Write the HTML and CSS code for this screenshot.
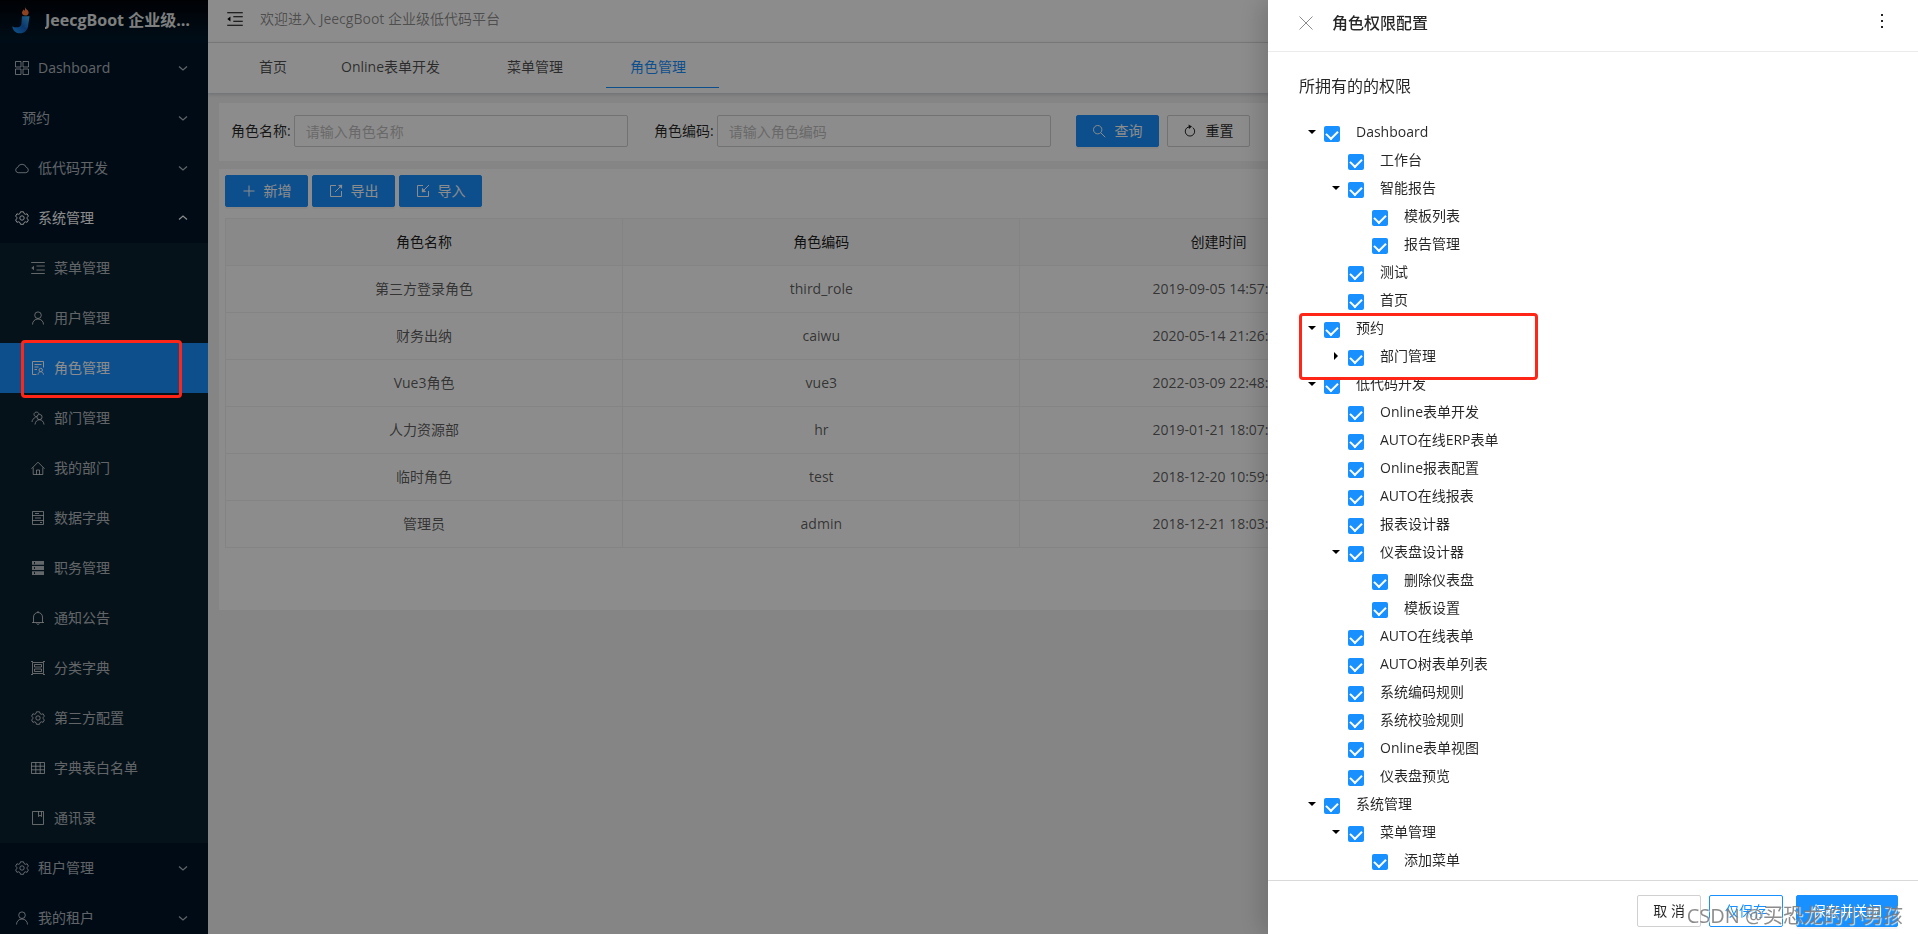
FILE: index.html
```html
<!DOCTYPE html>
<html lang="zh-CN">
<head>
<meta charset="utf-8">
<title>角色管理</title>
<link rel="stylesheet" href="styles.css">
</head>
<body>
<svg class="defs" aria-hidden="true">
  <defs>
    <linearGradient id="logo-blue" x1="0" y1="1" x2="1" y2="0"><stop offset="0" stop-color="#1aa0ff"/><stop offset=".5" stop-color="#1363c8"/><stop offset="1" stop-color="#3cb4f5"/></linearGradient>
  </defs>
  <symbol id="i-grid" viewBox="0 0 14 14"><path d="M.5.5h5.500v5.500h-5.500zM8 .5h5.500v5.500h-5.500zM.5 8h5.500v5.500h-5.500zM8 8h5.500v5.500h-5.500z"/></symbol>
  <symbol id="i-cloud" viewBox="0 0 14 14"><path d="M3.200 11.700a2.700 2.700 0 0 1-.5-5.300A4.500 4.500 0 0 1 11.300 6.400a2.700 2.700 0 0 1-.5 5.300z"/></symbol>
  <symbol id="i-gear" viewBox="0 0 14 14"><path d="M5.500.8h3l.5 1.700 1.300.8 1.800-.5 1.300 2.300-1.200 1.200v1.500l1.200 1.200-1.300 2.300-1.800-.5-1.300.8-.5 1.700h-3l-.5-1.700-1.300-.8-1.800.5L.6 9l1.200-1.200V6.300L.6 5.100l1.300-2.300 1.800.5 1.300-.8z"/><circle cx="7" cy="7" r="2.200"/></symbol>
  <symbol id="i-menu" viewBox="0 0 14 14"><path d="M.2 1.500h13.600M5.500 5h8.300M5.500 9h8.300M.2 12.500h13.600"/><path class="solid" d="M.3 7 3 4.800v4.400z"/></symbol>
  <symbol id="i-user" viewBox="0 0 14 14"><circle cx="7" cy="4.200" r="3.300"/><path d="M1.500 13.500c0-3 2.200-5.500 5.500-5.500s5.500 2.500 5.500 5.500"/></symbol>
  <symbol id="i-role" viewBox="0 0 14 14"><path d="M5.500 13.500h-4V.5h11v6M3.500 3.500h7M3.500 6h4M3.500 8.500h2.500"/><circle cx="9.700" cy="9" r="1.700"/><path d="M7 13.700c0-1.800 1.200-3 2.700-3s2.700 1.200 2.700 3"/></symbol>
  <symbol id="i-team" viewBox="0 0 14 14"><circle cx="8.500" cy="6" r="2.600"/><path d="M4 13.500C4.300 10.800 6 8.700 8.500 8.700s4.200 2.100 4.500 4.800M6 5.800C2.500 5.500 2 2 4.800 1.200 6.200.8 7.500 1.600 8 2.800M4.500 6.500C2.500 7 1.200 8.800 1 11"/></symbol>
  <symbol id="i-home" viewBox="0 0 14 14"><path d="M.5 7.700 7 1.200l6.500 6.500M2.200 6.500v7h9.600v-7M5.500 13.500V9h3v4.500"/></symbol>
  <symbol id="i-book" viewBox="0 0 14 14"><path d="M1.500.5h11v13h-11zM1.500 4.500h11M1.500 9.500h11M4 2.500h4M4 7h6M9 11.500h2"/></symbol>
  <symbol id="i-server" viewBox="0 0 14 14"><path class="solid" d="M1 0h12v3.800H1zM1 5.100h12v3.800H1zM1 10.200h12V14H1z"/><path class="cut" d="M3.500 1v1.800M3.500 6.100v1.800M3.500 11.200V13"/></symbol>
  <symbol id="i-bell" viewBox="0 0 14 14"><path d="M1 11.500h12M2.500 11.500V6a4.500 4.500 0 0 1 9 0v5.500M7 0v1.500M5.500 12.500Q7 14.500 8.500 12.500"/></symbol>
  <symbol id="i-group" viewBox="0 0 14 14"><path d="M1.500 1.500h11v11h-11zM3.500 3.500h7v2.500h-7zM3.500 8h7v2.500h-7zM0 .5h2M12 .5h2M0 13.500h2M12 13.500h2"/></symbol>
  <symbol id="i-table" viewBox="0 0 14 14"><path d="M.5 1.500h13v11H.5zM.5 5.200h13M.5 8.800h13M4.800 1.500v11M9.200 1.500v11"/></symbol>
  <symbol id="i-note" viewBox="0 0 14 14"><path d="M1.500.5h11v13h-11zM7.500 .5v5L9 4.200l1.500 1.300v-5"/></symbol>
  <symbol id="i-down" viewBox="0 0 10 10"><path d="m1 3.500 4 3.500 4-3.500"/></symbol>
  <symbol id="i-plus" viewBox="0 0 14 14"><path d="M7 1.500v11M1.500 7h11"/></symbol>
  <symbol id="i-export" viewBox="0 0 14 14"><path d="M7 1.500H1.500v11h11V7M6 8l6-6"/><path class="solid" d="m9 1 4.200-.2L13 5z"/></symbol>
  <symbol id="i-import" viewBox="0 0 14 14"><path d="M7 1.500H1.500v11h11V7M13 1 8 6"/><path class="solid" d="m6 3.800-.2 4.400 4.400-.2z"/></symbol>
  <symbol id="i-search" viewBox="0 0 14 14"><circle cx="5.700" cy="5.700" r="4.200"/><path d="m8.700 8.700 4.500 4.500"/></symbol>
  <symbol id="i-reset" viewBox="0 0 14 14"><path d="M9.800 3.600A4.700 4.700 0 1 1 4 3.700L6.500 2.800"/><path class="solid" d="m5.500.6 3.500 2-3 2.400z"/></symbol>
  <symbol id="i-close" viewBox="0 0 14 14"><path d="m.5.5 13 13M13.500.5l-13 13"/></symbol>
</svg>

<div class="layout">
  <aside class="sidebar">
    <div class="brand">
      <svg class="brand-logo" viewBox="0 0 20 28"><path fill="url(#logo-blue)" d="M10.500 10h8L17 20c-.7 5-4 8-8.500 8C4 28 1 25.500.3 20.500c2 1.200 5.200 1.700 7.200.8 1.700-.8 2.200-2.300 2.400-4z"/><path fill="#ff7a3d" d="M13.500 0c.5 2.500 4.300 3.500 4 6.500-.2 1.800-1.700 2.700-3.500 2.700s-3.600-1-3.500-3c.1-1.500 1.300-2 1.500-3.200.6.400 1 .8 1.200 1.500.7-1.200.8-2.800.3-4.500z"/></svg>
      <span class="brand-name">JeecgBoot 企业级低代码平台</span>
    </div>
    <nav class="menu">
      <a class="item" href="#"><svg class="icon"><use href="#i-grid"/></svg><span>Dashboard</span><svg class="arrow"><use href="#i-down"/></svg></a>
      <a class="item item-plain" href="#"><span>预约</span><svg class="arrow"><use href="#i-down"/></svg></a>
      <a class="item" href="#"><svg class="icon"><use href="#i-cloud"/></svg><span>低代码开发</span><svg class="arrow"><use href="#i-down"/></svg></a>
      <a class="item item-open" href="#"><svg class="icon"><use href="#i-gear"/></svg><span>系统管理</span><svg class="arrow arrow-up"><use href="#i-down"/></svg></a>
      <div class="submenu">
        <a class="item" href="#"><svg class="icon"><use href="#i-menu"/></svg><span>菜单管理</span></a>
        <a class="item" href="#"><svg class="icon"><use href="#i-user"/></svg><span>用户管理</span></a>
        <a class="item item-active" href="#"><svg class="icon"><use href="#i-role"/></svg><span>角色管理</span></a>
        <a class="item" href="#"><svg class="icon"><use href="#i-team"/></svg><span>部门管理</span></a>
        <a class="item" href="#"><svg class="icon"><use href="#i-home"/></svg><span>我的部门</span></a>
        <a class="item" href="#"><svg class="icon"><use href="#i-book"/></svg><span>数据字典</span></a>
        <a class="item" href="#"><svg class="icon"><use href="#i-server"/></svg><span>职务管理</span></a>
        <a class="item" href="#"><svg class="icon"><use href="#i-bell"/></svg><span>通知公告</span></a>
        <a class="item" href="#"><svg class="icon"><use href="#i-group"/></svg><span>分类字典</span></a>
        <a class="item" href="#"><svg class="icon"><use href="#i-gear"/></svg><span>第三方配置</span></a>
        <a class="item" href="#"><svg class="icon"><use href="#i-table"/></svg><span>字典表白名单</span></a>
        <a class="item" href="#"><svg class="icon"><use href="#i-note"/></svg><span>通讯录</span></a>
      </div>
      <a class="item" href="#"><svg class="icon"><use href="#i-gear"/></svg><span>租户管理</span><svg class="arrow"><use href="#i-down"/></svg></a>
      <a class="item" href="#"><svg class="icon"><use href="#i-user"/></svg><span>我的租户</span><svg class="arrow"><use href="#i-down"/></svg></a>
    </nav>
  </aside>

  <main class="main">
    <header class="topbar">
      <button class="fold" type="button" aria-label="折叠菜单"><svg class="icon"><use href="#i-menu"/></svg></button>
      <span>欢迎进入 JeecgBoot 企业级低代码平台</span>
    </header>
    <nav class="tabs">
      <a class="tab tab-home" href="#">首页</a>
      <a class="tab" href="#">Online表单开发</a>
      <a class="tab" href="#">菜单管理</a>
      <a class="tab tab-active" href="#">角色管理</a>
    </nav>
    <div class="content">
      <form class="card search">
        <div class="field"><label for="role-name">角色名称:</label><input id="role-name" type="text" placeholder="请输入角色名称"></div>
        <div class="field"><label for="role-code">角色编码:</label><input id="role-code" type="text" placeholder="请输入角色编码"></div>
        <div class="search-actions">
          <button class="btn btn-primary" type="button"><svg class="icon"><use href="#i-search"/></svg>查询</button>
          <button class="btn" type="button"><svg class="icon"><use href="#i-reset"/></svg>重置</button>
        </div>
      </form>
      <section class="card list">
        <div class="toolbar">
          <button class="btn btn-primary" type="button"><svg class="icon"><use href="#i-plus"/></svg>新增</button>
          <button class="btn btn-primary" type="button"><svg class="icon"><use href="#i-export"/></svg>导出</button>
          <button class="btn btn-primary" type="button"><svg class="icon"><use href="#i-import"/></svg>导入</button>
        </div>
        <table class="roles">
          <thead><tr><th>角色名称</th><th>角色编码</th><th>创建时间</th><td></td></tr></thead>
          <tbody>
            <tr><td>第三方登录角色</td><td>third_role</td><td>2019-09-05 14:57:00</td><td></td></tr>
            <tr><td>财务出纳</td><td>caiwu</td><td>2020-05-14 21:26:00</td><td></td></tr>
            <tr><td>Vue3角色</td><td>vue3</td><td>2022-03-09 22:48:00</td><td></td></tr>
            <tr><td>人力资源部</td><td>hr</td><td>2019-01-21 18:07:00</td><td></td></tr>
            <tr><td>临时角色</td><td>test</td><td>2018-12-20 10:59:00</td><td></td></tr>
            <tr><td>管理员</td><td>admin</td><td>2018-12-21 18:03:00</td><td></td></tr>
          </tbody>
        </table>
      </section>
    </div>
  </main>
</div>

<div class="mask"></div>

<aside class="drawer" role="dialog" aria-labelledby="drawer-title">
  <header class="drawer-head">
    <button class="close" type="button" aria-label="关闭"><svg class="icon"><use href="#i-close"/></svg></button>
    <h2 id="drawer-title">角色权限配置</h2>
    <button class="more" type="button" aria-label="更多"><i></i><i></i><i></i></button>
  </header>
  <div class="drawer-body">
    <h3>所拥有的的权限</h3>
    <ul class="tree">
      <li><div class="node"><button class="caret" type="button" aria-label="收起"></button><label><input type="checkbox" checked>Dashboard</label></div>
        <ul>
          <li><div class="node"><label><input type="checkbox" checked>工作台</label></div></li>
          <li><div class="node"><button class="caret" type="button" aria-label="收起"></button><label><input type="checkbox" checked>智能报告</label></div>
            <ul>
              <li><div class="node"><label><input type="checkbox" checked>模板列表</label></div></li>
              <li><div class="node"><label><input type="checkbox" checked>报告管理</label></div></li>
            </ul></li>
          <li><div class="node"><label><input type="checkbox" checked>测试</label></div></li>
          <li><div class="node"><label><input type="checkbox" checked>首页</label></div></li>
        </ul></li>
      <li><div class="node"><button class="caret" type="button" aria-label="收起"></button><label><input type="checkbox" checked>预约</label></div>
        <ul>
          <li><div class="node"><button class="caret caret-closed" type="button" aria-label="展开"></button><label><input type="checkbox" checked>部门管理</label></div></li>
        </ul></li>
      <li><div class="node"><button class="caret" type="button" aria-label="收起"></button><label><input type="checkbox" checked>低代码开发</label></div>
        <ul>
          <li><div class="node"><label><input type="checkbox" checked>Online表单开发</label></div></li>
          <li><div class="node"><label><input type="checkbox" checked>AUTO在线ERP表单</label></div></li>
          <li><div class="node"><label><input type="checkbox" checked>Online报表配置</label></div></li>
          <li><div class="node"><label><input type="checkbox" checked>AUTO在线报表</label></div></li>
          <li><div class="node"><label><input type="checkbox" checked>报表设计器</label></div></li>
          <li><div class="node"><button class="caret" type="button" aria-label="收起"></button><label><input type="checkbox" checked>仪表盘设计器</label></div>
            <ul>
              <li><div class="node"><label><input type="checkbox" checked>删除仪表盘</label></div></li>
              <li><div class="node"><label><input type="checkbox" checked>模板设置</label></div></li>
            </ul></li>
          <li><div class="node"><label><input type="checkbox" checked>AUTO在线表单</label></div></li>
          <li><div class="node"><label><input type="checkbox" checked>AUTO树表单列表</label></div></li>
          <li><div class="node"><label><input type="checkbox" checked>系统编码规则</label></div></li>
          <li><div class="node"><label><input type="checkbox" checked>系统校验规则</label></div></li>
          <li><div class="node"><label><input type="checkbox" checked>Online表单视图</label></div></li>
          <li><div class="node"><label><input type="checkbox" checked>仪表盘预览</label></div></li>
        </ul></li>
      <li><div class="node"><button class="caret" type="button" aria-label="收起"></button><label><input type="checkbox" checked>系统管理</label></div>
        <ul>
          <li><div class="node"><button class="caret" type="button" aria-label="收起"></button><label><input type="checkbox" checked>菜单管理</label></div>
            <ul>
              <li><div class="node"><label><input type="checkbox" checked>添加菜单</label></div></li>
            </ul></li>
        </ul></li>
    </ul>
  </div>
  <footer class="drawer-foot">
    <button class="btn" type="button">取 消</button>
    <button class="btn btn-ghost" type="button">仅保存</button>
    <button class="btn btn-primary btn-last" type="button">保存并关闭</button>
  </footer>
</aside>

<div class="mark mark-menu"></div>
<div class="mark mark-tree"></div>
<div class="watermark">CSDN @买恐龙的小男孩</div>
</body>
</html>
```

FILE: styles.css
```css
* { box-sizing: border-box; }
html, body { height: 100%; }
body {
  margin: 0;
  overflow: hidden;
  color: rgba(0, 0, 0, .85);
  background: #f2f2f2;
  font: 14px/22px "Open Sans", "Noto Sans CJK SC", sans-serif;
}
a { color: inherit; text-decoration: none; }
button, input { font: inherit; color: inherit; }
button { cursor: pointer; }
ul { margin: 0; padding: 0; list-style: none; }
.defs { position: absolute; width: 0; height: 0; }
.icon, .arrow { width: 14px; height: 14px; flex: none; fill: none; stroke: currentColor; stroke-width: 1; }
.solid { fill: currentColor; stroke: none; }
.cut { stroke: #0c2130; }

.layout { display: flex; height: 100vh; }

/* Sidebar */
.sidebar { flex: 0 0 208px; overflow: hidden; color: rgba(255, 255, 255, .7); background: #001529; }
.brand {
  display: flex; align-items: center; gap: 14px; height: 43px; padding: 0 17px 4px 12px;
  background: linear-gradient(#000308, #001a2e);
}
.brand-logo { width: 19px; height: 28px; flex: none; }
.brand-name {
  overflow: hidden; white-space: nowrap; text-overflow: ellipsis;
  color: #fff; font-size: 16px; font-weight: 700; opacity: .9;
}
.item { display: flex; align-items: center; height: 50px; gap: 9px; padding: 0 20px 0 15px; }
.item-plain { padding-left: 22px; }
.item-open { color: #fff; }
.arrow { width: 10px; height: 10px; margin-left: auto; stroke-width: 1.200; }
.arrow-up { transform: rotate(180deg); }
.submenu { background: #0c2130; }
.submenu .item { padding-left: 31px; }
.submenu .item-active { color: #fff; background: #1890ff; }

/* Top area */
.main { flex: 1; min-width: 0; }
.topbar {
  display: flex; align-items: center; gap: 16px; height: 43px; padding: 0 18px 5px;
  color: rgba(0, 0, 0, .45); background: #fff; border-bottom: 1px solid #e4e4e4;
}
.fold { display: flex; padding: 1px; border: 0; background: none; color: #000; }
.fold .icon { width: 16px; height: 16px; }
.tabs {
  display: flex; gap: 10px; height: 50px; padding: 0 27px 5px;
  color: rgba(0, 0, 0, .7); background: #fff; box-shadow: 0 1px 4px rgba(0, 21, 41, .2);
}
.tab { padding: 0 33px 0 24px; line-height: 48px; border-bottom: 1px solid transparent; }
.tab-home { padding-right: 20px; }
.tab-active { color: #1890ff; border-color: #1890ff; }
.content { display: flex; flex-direction: column; gap: 8px; padding: 10px 10px 0 11px; }
.card { background: #fff; }

/* Search form */
.search { display: flex; padding: 12px 23px 14px 12px; }
.field { display: flex; align-items: center; gap: 3px; flex: 0 0 24%; margin-right: 26px; }
.field + .field { margin-right: 25px; }
.field label { white-space: nowrap; }
.field input {
  flex: 1; min-width: 0; height: 32px; padding: 0 11px;
  background: #fff; border: 1px solid #d0d0d0; border-radius: 2px; outline: 0;
}
.field input::placeholder { color: #bfbfbf; }
.search-actions { display: flex; gap: 8px; }
.btn {
  display: flex; align-items: center; justify-content: center; gap: 8px; height: 32px; padding: 0 15px;
  background: #fff; border: 1px solid #d0d0d0; border-radius: 2px; white-space: nowrap;
}
.btn:has(.icon) { width: 83px; }
.btn-primary { color: #fff; background: #1890ff; border-color: #1890ff; box-shadow: 0 2px 0 rgba(0, 0, 0, .04); }
.btn-ghost { color: #1890ff; border-color: #1890ff; }

/* Role table */
.list { padding: 6px 6px 62px; }
.toolbar { display: flex; gap: 4px; margin-bottom: 11px; }
.roles { width: 100%; table-layout: fixed; border-collapse: collapse; color: rgba(0, 0, 0, .65); text-align: center; }
.roles th, .roles td { height: 47px; padding: 0; border: 1px solid #f0f0f0; }
.roles th { width: 23.7%; color: rgba(0, 0, 0, .9); font-weight: 400; }
.roles thead { background: #fafafa; }

/* Drawer */
.mask { position: fixed; inset: 0; background: rgba(0, 0, 0, .45); }
.drawer {
  position: fixed; top: 0; right: 0; bottom: 0; display: flex; flex-direction: column; width: 650px;
  background: #fff; box-shadow: -6px 0 24px rgba(0, 0, 0, .18);
}
.drawer-head { display: flex; align-items: center; flex: none; height: 52px; padding: 0 29px 6px 31px; border-bottom: 1px solid #ebebeb; }
.close { display: flex; padding: 0; border: 0; background: none; color: #8c8c8c; }
.drawer h2, .drawer h3 { margin: 0; font-size: 16px; line-height: 24px; }
.drawer h2 { margin-left: 19px; font-weight: 500; }
.drawer h3 { margin-bottom: 20px; font-weight: 400; }
.more { display: flex; flex-direction: column; gap: 4px; width: 14px; margin-left: auto; padding: 0 6px 4px; border: 0; background: none; }
.more i { width: 2px; height: 2px; background: #222; }
.drawer-body { flex: 1; min-height: 0; overflow: hidden; padding: 22px 31px 0; }
.tree { padding-left: 1px; }
.tree ul { padding-left: 24px; }
.node { display: flex; height: 28px; line-height: 28px; }
.node > label:only-child { margin-left: 24px; }
.node label { display: flex; gap: 16px; }
.caret { display: grid; place-items: center; width: 24px; padding: 0; border: 0; background: none; }
.caret::before { content: ""; border: 4px solid transparent; border-top-color: #000; border-bottom: 0; }
.caret-closed::before { border: 4px solid transparent; border-left-color: #000; border-right: 0; }
.node input { appearance: none; display: grid; place-items: center; width: 16px; height: 16px; margin: 8px 0 0; border-radius: 2px; background: #1890ff; }
.node input::before {
  content: ""; width: 6px; height: 9px; margin-top: -2px;
  border: solid #fff; border-width: 0 2px 2px 0; transform: rotate(45deg);
}
.drawer-foot { display: flex; gap: 8px; justify-content: flex-end; flex: none; height: 54px; padding: 14px 20px 7px; border-top: 1px solid #d9d9d9; }
.btn-last { margin-left: 5px; }

/* Annotations */
.mark { position: fixed; border: 3px solid #ff2617; border-radius: 4px; }
.mark-menu { left: 21px; top: 340px; width: 161px; height: 58px; }
.mark-tree { left: 1299px; top: 313px; width: 239px; height: 67px; }
.watermark {
  position: fixed; right: 15px; bottom: 5px; color: rgba(120, 120, 120, .85);
  font-size: 20px; line-height: 26px; text-shadow: 1px 1px 1px rgba(255, 255, 255, .8); white-space: nowrap;
}
```
